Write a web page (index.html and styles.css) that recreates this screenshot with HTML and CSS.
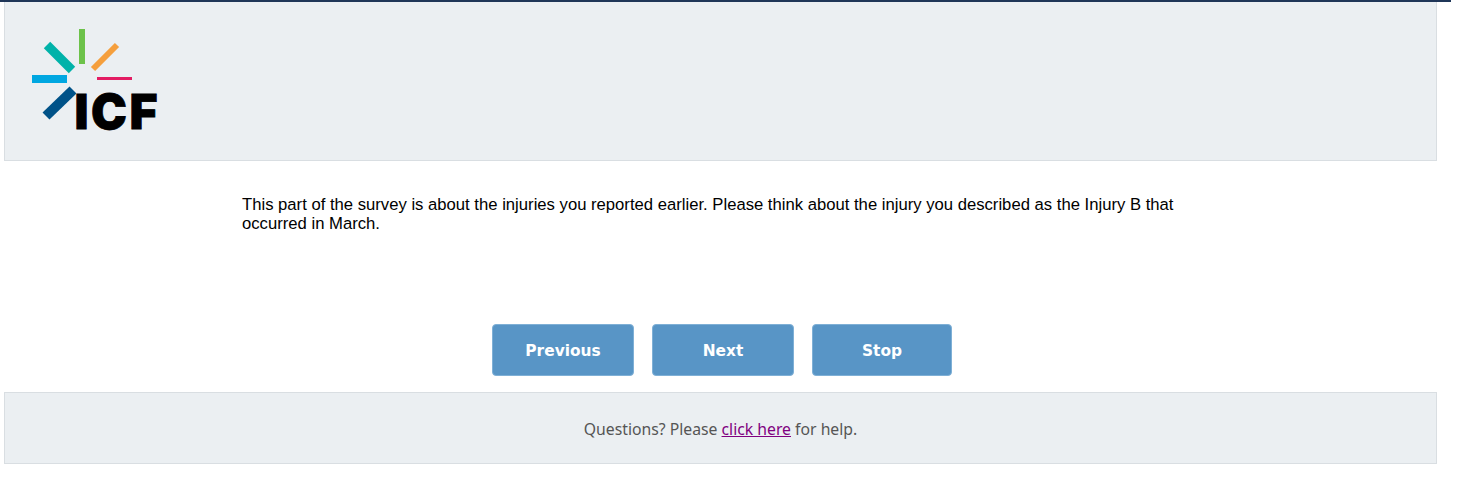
FILE: index.html
```html
<!DOCTYPE html>
<html lang="en">
<head>
    <meta charset="UTF-8">
    <meta name="viewport" content="width=device-width, initial-scale=1.0">
    <title>Survey</title>
    <link rel="stylesheet" href="styles.css">
</head>
<body>
    <div class="page">
        <header class="banner">
            <svg class="logo" width="140" height="115" viewBox="0 0 140 115" aria-label="ICF">
                <rect x="74" y="27" width="6" height="35" fill="#6cc24a"/>
                <line x1="88" y1="67" x2="112" y2="43" stroke="#f59f3d" stroke-width="6"/>
                <line x1="42" y1="43" x2="67" y2="68" stroke="#00b2a9" stroke-width="9"/>
                <rect x="27" y="73" width="35" height="8" fill="#00a7e1"/>
                <rect x="92" y="75" width="35" height="3" fill="#e31c63"/>
                <line x1="41" y1="114" x2="68" y2="88" stroke="#005288" stroke-width="10"/>
                <text class="logo-text" x="69.5" y="126.5" textLength="83">ICF</text>
            </svg>
        </header>

        <main class="content">
            <p class="intro">This part of the survey is about the injuries you reported earlier. Please think about the injury you described as the Injury B that occurred in March.</p>
        </main>

        <div class="nav-buttons">
            <button class="nav-btn btn-previous">Previous</button>
            <button class="nav-btn btn-next">Next</button>
            <button class="nav-btn btn-stop">Stop</button>
        </div>

        <footer class="help-bar">
            <span>Questions? Please <a href="#help">click here</a> for help.</span>
        </footer>
    </div>
</body>
</html>
```

FILE: styles.css
```css
body {
    margin: 0;
    background-color: #fff;
    font-family: "Liberation Sans", Arial, sans-serif;
}
.page {
    width: 1451px;
    border-top: 2px solid #1f3658;
}
.banner {
    height: 158px;
    margin: 0 14px 0 4px;
    background-color: #ebeff2;
    border: solid #d9dee2;
    border-width: 0 1px 1px 1px;
}
.logo {
    display: block;
    overflow: visible;
}
.logo-text {
    font-family: Inter, "Liberation Sans", sans-serif;
    font-size: 48px;
    font-weight: 900;
    fill: #000;
    stroke: #000;
    stroke-width: 0.8px;
}
.content {
    height: 163px;
    padding-top: 34px;
    box-sizing: border-box;
}
.intro {
    width: 950px;
    margin: 0 0 0 242px;
    font-size: 16.67px;
    line-height: 19px;
    color: #000;
}
.nav-buttons {
    display: flex;
    gap: 18px;
    margin-left: 492px;
}
.nav-btn {
    width: 142px;
    height: 52px;
    padding: 2px 0 0;
    background-color: #5895c6;
    border: 1px solid #7fb0d6;
    border-radius: 4px;
    color: #fff;
    font-family: "DejaVu Sans", sans-serif;
    font-size: 15.4px;
    font-weight: 700;
}
.btn-stop {
    width: 140px;
}
.help-bar {
    height: 68px;
    margin: 16px 14px 0 4px;
    padding-top: 2px;
    background-color: #ebeff2;
    border: 1px solid #d9dee2;
    display: flex;
    align-items: center;
    justify-content: center;
    color: #555;
    font-family: "Noto Sans", sans-serif;
    font-size: 15.75px;
}
.help-bar a {
    color: #800080;
}
```
